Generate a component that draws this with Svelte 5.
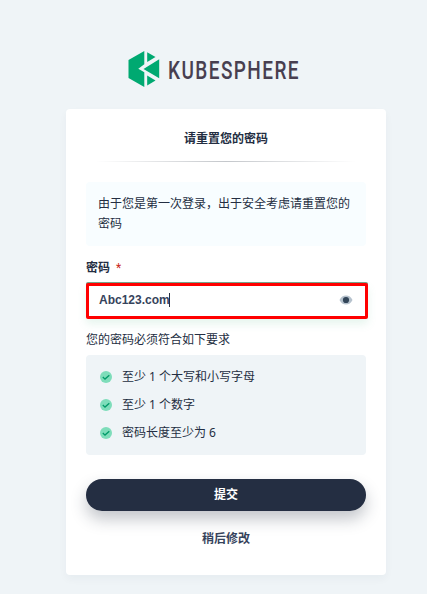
<script>
  const rules = ['至少 1 个大写和小写字母', '至少 1 个数字', '密码长度至少为 6'];
</script>

<div class="page">
  <svg class="logo" width="230" height="40" viewBox="0 0 230 40" aria-label="KubeSphere">
    <g fill="#00a971">
      <path d="M16.300 2v13.200L10.300 19.700 16.300 23.300V38L.5 29V11z" />
      <path d="M19.200 3.200 27.500 8 19.200 13z" />
      <path d="M31.200 10.200V29.200L15.500 20z" />
      <path d="M19.200 26.500 27.500 31.500 19.200 36.500z" />
    </g>
    <text x="40" y="30" textLength="132" lengthAdjust="spacingAndGlyphs">KUBESPHERE</text>
  </svg>

  <main class="card">
    <h1>请重置您的密码</h1>
    <div class="divider"></div>
    <p class="notice">由于您是第一次登录，出于安全考虑请重置您的密码</p>
    <div class="label">密码<span>*</span></div>
    <div class="field">
      <span class="value">Abc123.com</span><span class="caret"></span>
      <svg class="eye" width="14" height="10" viewBox="0 0 14 10">
        <path d="M.5 5C2 1.800 4.200.4 7 .4s5 1.400 6.500 4.600C12 8.200 9.800 9.600 7 9.600S2 8.200.5 5z" fill="#b6c2cd" />
        <circle cx="7" cy="5" r="3.100" fill="#324558" />
      </svg>
    </div>
    <p class="hint">您的密码必须符合如下要求</p>
    <ul>
      {#each rules as rule}
        <li>
          <svg width="12" height="12" viewBox="0 0 12 12">
            <circle cx="6" cy="6" r="6" fill="#7eddba" />
            <path d="M2.800 6 5 8.100 9.300 4.200" fill="none" stroke="#009a68" stroke-width="1.300" />
          </svg>
          <span>{rule}</span>
        </li>
      {/each}
    </ul>
    <button class="submit">提交</button>
    <button class="later">稍后修改</button>
  </main>
</div>

<style>
  :global(body) {
    background: #eff4f7;
  }
  .page {
    box-sizing: border-box;
    width: 427px;
    height: 594px;
    padding: 49px 41px 0 66px;
    overflow: hidden;
    background: #eff4f7;
    color: #242e42;
    font: 12px/20px Roboto, "Noto Sans CJK SC", sans-serif;
  }
  .logo {
    display: block;
    margin: 0 0 20px 62px;
    overflow: visible;
  }
  .logo text {
    fill: #483f50;
    font: 500 26.5px Roboto, sans-serif;
    letter-spacing: 2px;
  }
  .card {
    box-sizing: border-box;
    width: 320px;
    height: 466px;
    padding: 20px;
    border-radius: 4px;
    background: #fff;
    box-shadow: 0 4px 8px rgba(36, 46, 66, 0.04);
  }
  h1 {
    margin: 0;
    font-size: 12px;
    line-height: 20px;
    font-weight: 700;
    text-align: center;
  }
  .divider {
    height: 1px;
    margin: 12px 10px 20px;
    background: linear-gradient(90deg, #fff, #c4c7cb 50%, #fff);
  }
  .notice {
    box-sizing: border-box;
    height: 64px;
    margin: 0;
    padding: 12px;
    border-radius: 4px;
    background: #f8fdff;
  }
  .label {
    margin-top: 12px;
    font-weight: 700;
  }
  .label span {
    margin-left: 6px;
    color: #ca2621;
    font-weight: 400;
  }
  .field {
    box-sizing: border-box;
    display: flex;
    align-items: center;
    width: 282px;
    height: 36px;
    margin-top: 5px;
    padding: 0 12px 2px 10px;
    border: 3px solid #f00;
    border-radius: 2px;
    background: #fff;
    box-shadow: 0 -1px 0 #74a58c, 0 5px 8px rgba(85, 188, 138, 0.15);
    font-family: "Liberation Sans", sans-serif;
    font-weight: 700;
    color: #36435c;
  }
  .caret {
    width: 1px;
    height: 14px;
    margin-left: -1px;
    background: #242e42;
  }
  .eye {
    margin-left: auto;
  }
  .hint {
    margin: 11px 0 5px;
  }
  ul {
    box-sizing: border-box;
    height: 100px;
    margin: 0;
    padding: 12px 14px;
    border-radius: 4px;
    background: #eff4f7;
    font-family: "Noto Sans", "Noto Sans CJK SC", sans-serif;
    list-style: none;
  }
  li {
    display: flex;
    align-items: center;
    gap: 10px;
    height: 20px;
    margin-bottom: 8px;
  }
  button {
    display: block;
    padding: 0;
    border: 0;
    font: inherit;
    font-weight: 700;
  }
  .submit {
    width: 280px;
    height: 32px;
    margin-top: 24px;
    border-radius: 16px;
    background: #242e42;
    box-shadow: 0 8px 16px rgba(35, 45, 65, 0.28);
    color: #fff;
  }
  .later {
    margin: 18px auto 0;
    background: none;
    color: #36435c;
    line-height: 20px;
  }
</style>
